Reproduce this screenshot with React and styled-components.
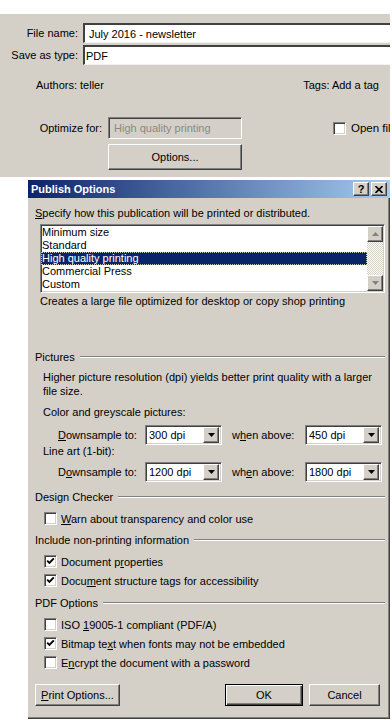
import React from "react";
import styled, { createGlobalStyle } from "styled-components";

const face = "#d4d0c8";

const GlobalStyle = createGlobalStyle`
  html, body {
    margin: 0;
    padding: 0;
    background: #fff;
  }
  body {
    font-family: "Liberation Sans", Arial, sans-serif;
    font-size: 11px;
    color: #000;
  }
`;

const raised = `
  border: 1px solid;
  border-color: #fff #404040 #404040 #fff;
  box-shadow: inset -1px -1px #808080;
`;

const sunken = `
  border: 1px solid;
  border-color: #808080 #fff #fff #808080;
  box-shadow: inset 1px 1px #404040, inset -1px -1px ${face};
`;

const Page = styled.div`
  display: flex;
  flex-direction: column;
  width: 392px;
  overflow: hidden;
`;

/* ---------- save dialog strip ---------- */

const TopPanel = styled.div`
  margin-top: 14px;
  width: 390px;
  height: 163px;
  box-sizing: border-box;
  padding-top: 9px;
  background: ${face};
  overflow: hidden;
`;

const FieldRow = styled.div`
  display: grid;
  grid-template-columns: 83px 1fr;
  align-items: center;
  height: 20px;
  & + & {
    margin-top: 2px;
  }
`;

const FieldLabel = styled.div`
  text-align: right;
  padding-right: 5px;
  white-space: nowrap;
`;

const TextInput = styled.div`
  height: 20px;
  box-sizing: border-box;
  display: flex;
  align-items: center;
  padding-left: ${(p) => p.$pad || 4}px;
  background: #fff;
  border-top: 2px solid #404040;
  border-left: 2px solid #404040;
  border-bottom: 1px solid #f4f3ef;
`;

const MetaRow = styled.div`
  display: flex;
  justify-content: space-between;
  margin-top: 14px;
  padding: 0 11px 0 36px;
  line-height: 13px;
`;

const OptimizeGrid = styled.div`
  display: grid;
  grid-template-columns: 102px 134px 1fr;
  column-gap: 6px;
  row-gap: 5px;
  margin-top: 25px;
`;

const OptLabel = styled.div`
  align-self: center;
  text-align: right;
`;

const DisabledField = styled.div`
  height: 22px;
  box-sizing: border-box;
  display: flex;
  align-items: center;
  padding-left: 5px;
  color: #8a8884;
  ${sunken}
  box-shadow: inset 1px 1px #404040;
`;

const OpenFile = styled.label`
  display: flex;
  align-items: center;
  gap: 5px;
  padding-left: 85px;
  white-space: nowrap;
  font-size: 11.5px;
`;

const OptionsButton = styled.div`
  grid-column: 2;
  height: 26px;
  box-sizing: border-box;
  display: flex;
  align-items: center;
  justify-content: center;
  background: ${face};
  ${raised}
`;

/* ---------- publish options dialog ---------- */

const Dialog = styled.div`
  margin: 3px 0 0 28px;
  width: 362px;
  height: 539px;
  box-sizing: border-box;
  display: flex;
  flex-direction: column;
  background: ${face};
  box-shadow: inset -1px -1px #404040, inset -2px -2px #808080;
`;

const TitleBar = styled.div`
  height: 18px;
  display: flex;
  align-items: center;
  padding: 0 3px;
  background: linear-gradient(to right, #0a246a, #a6caf0);
  color: #fff;
  font-weight: bold;
`;

const TitleText = styled.div`
  flex: 1;
`;

const CaptionButton = styled.div`
  width: 16px;
  height: 14px;
  box-sizing: border-box;
  display: flex;
  align-items: center;
  justify-content: center;
  background: ${face};
  color: #000;
  font-weight: bold;
  font-size: 11px;
  ${raised}
  & + & {
    margin-left: 2px;
  }
`;

const Body = styled.div`
  display: flex;
  flex-direction: column;
  padding: 9px 5px 0 7px;
`;

const Line = styled.div`
  line-height: ${(p) => p.$lh || 13}px;
  margin-top: ${(p) => p.$mt || 0}px;
  padding-left: ${(p) => p.$indent || 0}px;
  white-space: nowrap;
`;

const U = styled.span`
  text-decoration: underline;
  text-underline-offset: 1px;
`;

const ListBox = styled.div`
  margin: 4px 0 0 5px;
  height: 69px;
  box-sizing: border-box;
  display: flex;
  background: #fff;
  ${sunken}
`;

const ListItems = styled.div`
  flex: 1;
  padding-top: 1px;
`;

const ListItem = styled.div`
  height: 13px;
  line-height: 13px;
  padding-left: 1px;
  background: ${(p) => (p.$selected ? "#0a246a" : "transparent")};
  color: ${(p) => (p.$selected ? "#fff" : "#000")};
  outline: ${(p) => (p.$selected ? "1px dotted #c8c4bc" : "none")};
  outline-offset: -1px;
`;

const ScrollBar = styled.div`
  width: 16px;
  margin: 1px 1px 1px 0;
  display: flex;
  flex-direction: column;
  justify-content: space-between;
  background-color: #fff;
  background-image: conic-gradient(${face} 25%, #fff 0 50%, ${face} 0 75%, #fff 0);
  background-size: 2px 2px;
`;

const ScrollArrow = styled.div`
  width: 16px;
  height: 16px;
  box-sizing: border-box;
  display: flex;
  align-items: center;
  justify-content: center;
  background: ${face};
  ${raised}
`;

const GroupHeader = styled.div`
  display: flex;
  align-items: center;
  height: 14px;
  margin-top: ${(p) => p.$mt || 0}px;
  white-space: nowrap;
  &::after {
    content: "";
    flex: 1;
    margin-left: 5px;
    border-top: 1px solid #808080;
    border-bottom: 1px solid #fff;
  }
`;

const DpiRow = styled.div`
  display: grid;
  grid-template-columns: 87px 77px 83px 77px;
  align-items: center;
  height: 20px;
  margin-top: ${(p) => p.$mt || 0}px;
  padding-left: 23px;
`;

const DpiLabel = styled.div`
  padding-left: ${(p) => p.$pad || 0}px;
  white-space: nowrap;
`;

const Combo = styled.div`
  height: 20px;
  box-sizing: border-box;
  display: flex;
  align-items: center;
  padding: 2px;
  background: #fff;
  ${sunken}
`;

const ComboText = styled.div`
  flex: 1;
  padding-left: 1px;
`;

const ComboButton = styled.div`
  width: 16px;
  height: 16px;
  box-sizing: border-box;
  display: flex;
  align-items: center;
  justify-content: center;
  background: ${face};
  ${raised}
`;

const CheckRow = styled.div`
  display: flex;
  align-items: center;
  gap: 4px;
  height: 19px;
  margin-top: ${(p) => p.$mt || 0}px;
  padding-left: 9px;
  white-space: nowrap;
`;

const Box = styled.div`
  width: 13px;
  height: 13px;
  box-sizing: border-box;
  flex: none;
  display: flex;
  align-items: center;
  justify-content: center;
  background: #fff;
  ${sunken}
`;

const ButtonRow = styled.div`
  display: flex;
  margin-top: 12px;
  padding-right: 5px;
`;

const PushButton = styled.div`
  width: ${(p) => p.$w}px;
  height: 22px;
  box-sizing: border-box;
  display: flex;
  align-items: center;
  justify-content: center;
  background: ${face};
  ${(p) =>
    p.$default
      ? `border: 1px solid #000;
         box-shadow: inset 1px 1px #fff, inset -1px -1px #404040, inset -2px -2px #808080;`
      : raised}
  margin-left: ${(p) => p.$ml || 0}px;
`;

const Spacer = styled.div`
  flex: 1;
`;

const Checkbox = ({ checked }) => (
  <Box>
    {checked && (
      <svg width="9" height="9" viewBox="0 0 9 9">
        <path d="M1.2 3.6 L3.4 5.8 L7.8 1.4" fill="none" stroke="#000" strokeWidth="1.9" />
      </svg>
    )}
  </Box>
);

const Arrow = ({ up, color = "#000" }) => (
  <svg width="7" height="4" viewBox="0 0 7 4">
    <path d={up ? "M3.5 0 L7 4 L0 4 Z" : "M0 0 L7 0 L3.5 4 Z"} fill={color} />
  </svg>
);

const Select = ({ value }) => (
  <Combo>
    <ComboText>{value}</ComboText>
    <ComboButton>
      <Arrow />
    </ComboButton>
  </Combo>
);

const presets = ["Minimum size", "Standard", "High quality printing", "Commercial Press", "Custom"];

export default function App() {
  return (
    <Page>
      <GlobalStyle />
      <TopPanel>
        <FieldRow>
          <FieldLabel>File name:</FieldLabel>
          <TextInput>July 2016 - newsletter</TextInput>
        </FieldRow>
        <FieldRow>
          <FieldLabel>Save as type:</FieldLabel>
          <TextInput $pad={1}>PDF</TextInput>
        </FieldRow>
        <MetaRow>
          <span>Authors: teller</span>
          <span>Tags: Add a tag</span>
        </MetaRow>
        <OptimizeGrid>
          <OptLabel>Optimize for:</OptLabel>
          <DisabledField>High quality printing</DisabledField>
          <OpenFile>
            <Checkbox />
            Open file after publishing
          </OpenFile>
          <OptionsButton>Options...</OptionsButton>
        </OptimizeGrid>
      </TopPanel>

      <Dialog>
        <TitleBar>
          <TitleText>Publish Options</TitleText>
          <CaptionButton>?</CaptionButton>
          <CaptionButton>
            <svg width="8" height="7" viewBox="0 0 8 7">
              <path d="M0.5 0 L7.5 7 M7.5 0 L0.5 7" stroke="#000" strokeWidth="1.6" />
            </svg>
          </CaptionButton>
        </TitleBar>
        <Body>
          <Line>
            <U>S</U>pecify how this publication will be printed or distributed.
          </Line>
          <ListBox>
            <ListItems>
              {presets.map((p) => (
                <ListItem key={p} $selected={p === "High quality printing"}>
                  {p}
                </ListItem>
              ))}
            </ListItems>
            <ScrollBar>
              <ScrollArrow>
                <Arrow up color="#808080" />
              </ScrollArrow>
              <ScrollArrow>
                <Arrow color="#808080" />
              </ScrollArrow>
            </ScrollBar>
          </ListBox>
          <Line $mt={2} $indent={5}>
            Creates a large file optimized for desktop or copy shop printing
          </Line>

          <GroupHeader $mt={42}>Pictures</GroupHeader>
          <Line $mt={6} $lh={14} $indent={8}>
            Higher picture resolution (dpi) yields better print quality with a larger
            <br />
            file size.
          </Line>
          <Line $mt={8} $indent={8}>
            Color and greyscale pictures:
          </Line>
          <DpiRow $mt={6}>
            <DpiLabel>
              <U>D</U>ownsample to:
            </DpiLabel>
            <Select value="300 dpi" />
            <DpiLabel $pad={10}>
              w<U>h</U>en above:
            </DpiLabel>
            <Select value="450 dpi" />
          </DpiRow>
          <Line $indent={8}>Line art (1-bit):</Line>
          <DpiRow $mt={4}>
            <DpiLabel>
              D<U>o</U>wnsample to:
            </DpiLabel>
            <Select value="1200 dpi" />
            <DpiLabel $pad={10}>
              wh<U>e</U>n above:
            </DpiLabel>
            <Select value="1800 dpi" />
          </DpiRow>

          <GroupHeader $mt={8}>Design Checker</GroupHeader>
          <CheckRow $mt={5}>
            <Checkbox />
            <span>
              <U>W</U>arn about transparency and color use
            </span>
          </CheckRow>

          <GroupHeader $mt={5}>Include non-printing information</GroupHeader>
          <CheckRow $mt={5}>
            <Checkbox checked />
            <span>
              Document p<U>r</U>operties
            </span>
          </CheckRow>
          <CheckRow>
            <Checkbox checked />
            <span>
              Docu<U>m</U>ent structure tags for accessibility
            </span>
          </CheckRow>

          <GroupHeader $mt={6}>PDF Options</GroupHeader>
          <CheckRow $mt={5}>
            <Checkbox />
            <span>
              ISO <U>1</U>9005-1 compliant (PDF/A)
            </span>
          </CheckRow>
          <CheckRow>
            <Checkbox checked />
            <span>
              Bitmap te<U>x</U>t when fonts may not be embedded
            </span>
          </CheckRow>
          <CheckRow>
            <Checkbox />
            <span>
              E<U>n</U>crypt the document with a password
            </span>
          </CheckRow>

          <ButtonRow>
            <PushButton $w={85}>
              <span>
                <U>P</U>rint Options...
              </span>
            </PushButton>
            <Spacer />
            <PushButton $w={78} $default>
              OK
            </PushButton>
            <PushButton $w={71} $ml={6}>
              Cancel
            </PushButton>
          </ButtonRow>
        </Body>
      </Dialog>
    </Page>
  );
}
